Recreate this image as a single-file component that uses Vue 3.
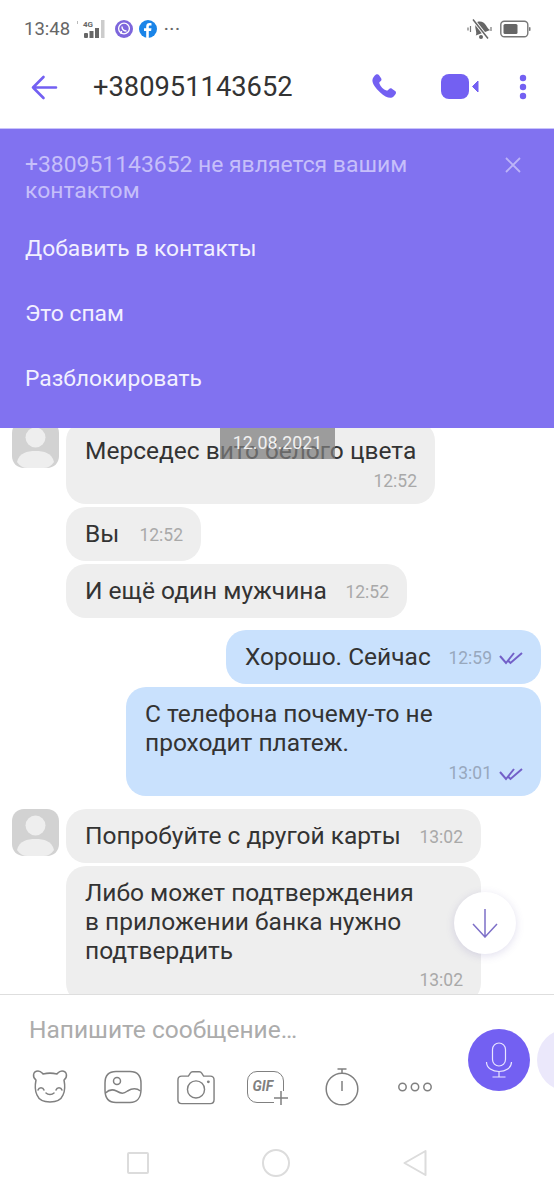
<template>
  <div class="phone">
    <div class="status">
      <span class="clock">13:48</span>
      <svg class="signal" width="32" height="20" viewBox="0 0 32 20">
        <rect x="2" y="2" width="1" height="3" fill="#bbb"/>
        <text x="8" y="8" font-size="8" font-weight="700" fill="#666" font-family="Roboto, sans-serif">4G</text>
        <rect x="9" y="14" width="4" height="5" rx="1" fill="#666"/>
        <rect x="14.500" y="12" width="4" height="7" fill="#666"/>
        <rect x="20" y="9" width="4" height="10" fill="#666"/>
        <rect x="26" y="1" width="3.500" height="18" fill="#ccc"/>
      </svg>
      <svg class="app" width="18" height="18" viewBox="0 0 18 18">
        <circle cx="9" cy="9" r="9" fill="#7d66dc"/>
        <circle cx="9" cy="8.500" r="5.400" fill="none" stroke="#fff" stroke-width="1.300"/>
        <path d="M6 14l.5-3M7 6.500c0 3 2 4.500 4.500 4.500" fill="none" stroke="#fff" stroke-width="1.400"/>
      </svg>
      <svg class="app" width="18" height="18" viewBox="0 0 18 18">
        <circle cx="9" cy="9" r="9" fill="#1a84e8"/>
        <path d="M9.800 18v-7h2.300l.4-2.700H9.800V6.800c0-.8.300-1.300 1.300-1.300h1.400V3.200c-.5-.1-1.200-.2-2-.2-2 0-3.300 1.200-3.300 3.400v1.900H5v2.700h2.200v7z" fill="#fff"/>
      </svg>
      <span class="more">···</span>
      <span class="grow"></span>
      <svg class="mute" width="26" height="22" viewBox="0 0 26 22">
        <path d="M6.500 15.500c1.500-1 1.500-3.500 2-6C9 6 11 3 14 3.500s5 3 5.500 6c.4 2.500 1 5 2.500 6z" fill="#666" transform="rotate(-20 13 10)"/>
        <circle cx="14" cy="19" r="2" fill="#666"/>
        <path d="M6 1.500l15 19" stroke="#fff" stroke-width="3.500"/>
        <path d="M6 1.500l15 19" stroke="#666" stroke-width="1.500"/>
        <path d="M3.500 8v6M1 9.500v3M24 9v4" stroke="#777" stroke-width="1.200"/>
      </svg>
      <svg class="battery" width="31" height="18" viewBox="0 0 31 18">
        <rect x=".8" y="1.300" width="27" height="15.400" rx="3.500" fill="none" stroke="#777" stroke-width="1.400"/>
        <rect x="3.500" y="4" width="14" height="10" rx="1.500" fill="#666"/>
        <rect x="29" y="7" width="1.500" height="4" rx=".7" fill="#777"/>
      </svg>
    </div>

    <header class="head">
      <svg class="back" width="28" height="28" viewBox="0 0 28 28">
        <path d="M26 14.500H3M13.500 4L3 14.500 13.500 25" fill="none" stroke="#7360f2" stroke-width="2.600" stroke-linecap="round" stroke-linejoin="round"/>
      </svg>
      <span class="title">+380951143652</span>
      <span class="grow"></span>
      <svg width="26" height="26" viewBox="0 0 26 26">
        <path d="M5 .6c1-.6 2.200-.5 2.900.4l2.200 3.200c.6.9.5 2-.3 2.800L8.600 8.100c-.4.400-.4.900-.2 1.400.6 1.600 1.500 3 2.700 4.200 1.300 1.300 2.800 2.200 4.400 2.800.5.200 1 .1 1.400-.3l1.200-1.200c.8-.8 1.900-.9 2.800-.3l3.200 2.200c1 .7 1.200 2 .5 3-.9 1.300-2.100 3-3.600 3.600-2.800 1-7.700-1-11.800-5.100C4.500 14.300 1.300 9.300 1.400 6.200 1.500 4.300 3.400 1.700 5 .6z" fill="#7360f2"/>
      </svg>
      <svg class="video" width="40" height="26" viewBox="0 0 40 26">
        <rect x="1" y="0" width="28" height="25" rx="8" fill="#7360f2"/>
        <path d="M38 7v11l-5.500-5.500z" fill="#7360f2" stroke="#7360f2" stroke-linejoin="round"/>
      </svg>
      <svg class="dots" width="8" height="26" viewBox="0 0 8 26">
        <circle cx="4" cy="4" r="3.200" fill="#7360f2"/>
        <circle cx="4" cy="13" r="3.200" fill="#7360f2"/>
        <circle cx="4" cy="22" r="3.200" fill="#7360f2"/>
      </svg>
    </header>

    <section class="banner">
      <div class="notice">
        <p>+380951143652 не является вашим контактом</p>
        <svg width="16" height="16" viewBox="0 0 16 16">
          <path d="M1 1l14 14M15 1L1 15" stroke="#bdb4f8" stroke-width="1.800"/>
        </svg>
      </div>
      <div class="action" v-for="a in actions" :key="a">{{ a }}</div>
    </section>

    <main class="chat">
      <div class="date">12.08.2021</div>
      <div class="feed">
        <div v-for="(m, i) in messages" :key="i" class="msg" :class="[m.me ? 'me' : 'them', { first: m.first }]">
          <svg v-if="m.avatar" class="avatar" width="47" height="47" viewBox="0 0 47 47">
            <path d="M12 0h23c7 0 12 5 12 12v23c0 7-5 12-12 12H12C5 47 0 42 0 35V12C0 5 5 0 12 0z" fill="#d2d2d2"/>
            <circle cx="23.500" cy="16.500" r="10" fill="#eeeeee"/>
            <path d="M5 41c2-9 10-11 18.500-11S40 32 42 41c-3 4-6 6-10 6H15c-4 0-7-2-10-6z" fill="#eeeeee"/>
          </svg>
          <div class="bubble" :class="{ stacked: m.stacked }" :style="{ width: m.width + 'px', height: m.height ? m.height + 'px' : null }">
            <span class="text">{{ m.text }}</span>
            <span class="meta">
              <span class="time">{{ m.time }}</span>
              <svg v-if="m.me" width="24" height="14" viewBox="0 0 24 14">
                <path d="M1 5l6 7L15 2M9 9.500l2.500 2.500L23 2" fill="none" stroke="#7360c8" stroke-width="2"/>
              </svg>
            </span>
          </div>
        </div>
      </div>
      <button class="down">
        <svg width="28" height="30" viewBox="0 0 28 30">
          <path d="M14 1v28M2 16l12 13 12-13" fill="none" stroke="#7e70c8" stroke-width="1.500"/>
        </svg>
      </button>
    </main>

    <footer class="composer">
      <div class="placeholder">Напишите сообщение…</div>
      <div class="tools">
        <span class="tool">
          <svg width="40" height="36" viewBox="0 0 40 36">
            <path d="M6 11C2 8 3 2 8 2c3 0 4 2 5 3 4-1 10-1 14 0 1-1 2-3 5-3 5 0 6 6 2 9 1 5 1 11-1 15-2 5-6 7-13 7s-11-2-13-7c-2-4-2-10-1-15z" fill="none" stroke="#808080" stroke-width="1.500" stroke-linejoin="round"/>
            <path d="M8 21c1-3 5-3 6 0M26 21c1-3 5-3 6 0M16 24c2 2 6 2 8 0" fill="none" stroke="#808080" stroke-width="1.500" stroke-linecap="round"/>
          </svg>
        </span>
        <span class="tool">
          <svg width="38" height="34" viewBox="0 0 38 34">
            <path d="M12 1.500h14c7 0 11 4 11 12v6c0 8-4 13-11 13H12C5 32.500 1 28 1 20v-7C1 5 5 1.500 12 1.500z" fill="none" stroke="#808080" stroke-width="1.500"/>
            <circle cx="13" cy="11" r="3.500" fill="none" stroke="#808080" stroke-width="1.500"/>
            <path d="M1.500 23c4-4 7-4 11-2 5 3 7 3 11 0 5-3 9-3 13 0" fill="none" stroke="#808080" stroke-width="1.500"/>
          </svg>
        </span>
        <span class="tool">
          <svg width="38" height="35" viewBox="0 0 40 36">
            <path d="M5 6h7l2-3c.5-1 1-1.500 2.500-1.500h7C25 1.500 25.500 2 26 3l2 3h7c2.500 0 4 1.500 4 4v21c0 2.500-1.500 4-4 4H5c-2.500 0-4-1.500-4-4V10c0-2.500 1.500-4 4-4z" fill="none" stroke="#808080" stroke-width="1.500"/>
            <circle cx="20" cy="20" r="9" fill="none" stroke="#808080" stroke-width="1.500"/>
            <circle cx="33" cy="12" r="1.500" fill="#808080"/>
          </svg>
        </span>
        <span class="tool gif">
          <span class="gif-box">GIF</span>
          <svg class="plus" width="14" height="14" viewBox="0 0 14 14">
            <path d="M7 0v14M0 7h14" stroke="#808080" stroke-width="1.500"/>
          </svg>
        </span>
        <span class="tool">
          <svg width="34" height="38" viewBox="0 0 34 38">
            <circle cx="17" cy="21" r="15.800" fill="none" stroke="#808080" stroke-width="1.500"/>
            <path d="M17 1v4M12.500 1h9M17 13v10" fill="none" stroke="#808080" stroke-width="1.500"/>
          </svg>
        </span>
        <span class="tool">
          <svg width="34" height="12" viewBox="0 0 34 12">
            <circle cx="4.500" cy="6" r="3.700" fill="none" stroke="#808080" stroke-width="1.500"/>
            <circle cx="17" cy="6" r="3.700" fill="none" stroke="#808080" stroke-width="1.500"/>
            <circle cx="29.500" cy="6" r="3.700" fill="none" stroke="#808080" stroke-width="1.500"/>
          </svg>
        </span>
      </div>
      <span class="ghost"></span>
      <button class="mic">
        <svg width="28" height="36" viewBox="0 0 28 36">
          <rect x="7.500" y="1" width="13" height="23" rx="6.500" fill="none" stroke="#e9e5ff" stroke-width="1.200"/>
          <path d="M1.500 20c0 6 6 9.500 12.500 9.500S26.500 26 26.500 20M14 29.500V35M7.500 35h13" fill="none" stroke="#e9e5ff" stroke-width="1.200"/>
        </svg>
      </button>
    </footer>

    <nav class="nav">
      <span class="sq"></span>
      <span class="ci"></span>
      <svg width="24" height="28" viewBox="0 0 24 28">
        <path d="M22.500 2L1.500 14l21 12z" fill="none" stroke="#dcdcdc" stroke-width="2" stroke-linejoin="round"/>
      </svg>
    </nav>
  </div>
</template>

<script setup>
const actions = ['Добавить в контакты', 'Это спам', 'Разблокировать']

const messages = [
  { text: 'Мерседес вито белого цвета', time: '12:52', width: 369, height: 83, avatar: true, stacked: true, first: true },
  { text: 'Вы', time: '12:52', width: 135 },
  { text: 'И ещё один мужчина', time: '12:52', width: 341 },
  { text: 'Хорошо. Сейчас', time: '12:59', width: 315, me: true },
  { text: 'С телефона почему-то не проходит платеж.', time: '13:01', width: 415, height: 109, me: true, stacked: true },
  { text: 'Попробуйте с другой карты', time: '13:02', width: 415, avatar: true },
  { text: 'Либо может подтверждения в приложении банка нужно подтвердить', time: '13:02', width: 415, height: 137, stacked: true }
]
</script>

<style>
html, body { margin: 0; background: #fff; }
</style>

<style scoped>
.phone {
  width: 554px;
  height: 1200px;
  overflow: hidden;
  display: flex;
  flex-direction: column;
  background: #fff;
  font-family: Roboto, "Noto Sans", sans-serif;
  color: #333;
}
.grow { flex: 1; }

.status {
  height: 58px;
  display: flex;
  align-items: center;
  padding: 0 24px;
  gap: 6px;
  color: #666;
}
.clock { font-size: 18.500px; margin-right: -1px; }
.signal { margin-right: 2px; }
.more { font-size: 15px; font-weight: 700; letter-spacing: 1px; margin-left: 1px; }
.battery { margin-left: 1px; margin-right: -1px; }

.head {
  height: 58px;
  display: flex;
  align-items: center;
  padding: 0 27px 12px 30px;
  border-bottom: 1px solid #c9c3fa;
  box-sizing: content-box;
}
.title { font-size: 27.300px; margin-left: 35px; color: #333; }
.video { margin-left: 43px; }
.dots { margin-left: 39px; }

.banner {
  position: relative;
  z-index: 2;
  height: 299px;
  flex: none;
  box-sizing: border-box;
  padding: 23px 25px 0;
  background: #8172f0;
  color: #f2f0ff;
}
.notice {
  display: flex;
  justify-content: space-between;
  align-items: flex-start;
  height: 64px;
  color: #c6bffa;
}
.notice p {
  margin: 0;
  width: 440px;
  font-size: 22.900px;
  line-height: 26px;
}
.notice svg { margin: 5px 8px 0 0; }
.action {
  height: 65px;
  font-size: 22.800px;
  line-height: 65px;
}

.chat {
  position: relative;
  height: 566px;
  flex: none;
  overflow: hidden;
}
.date {
  position: absolute;
  z-index: 1;
  top: 0;
  left: 220px;
  width: 115px;
  height: 31px;
  padding-top: 4px;
  box-sizing: border-box;
  text-align: center;
  font-size: 17.800px;
  color: #f1f1f1;
  background: rgba(125, 125, 125, .72);
}
.feed {
  display: flex;
  flex-direction: column;
  gap: 3px;
  margin-top: -7px;
  padding: 0 13px 0 12px;
}
.msg { display: flex; position: relative; }
.them { padding-left: 54px; }
.me { justify-content: flex-end; }
.me:nth-child(4) { margin-top: 9px; }
.them:nth-child(6) { margin-top: 10px; }
.avatar { position: absolute; left: 0; top: 0; }
.bubble {
  box-sizing: border-box;
  min-height: 54px;
  padding: 0 18px 2px 19px;
  display: flex;
  align-items: center;
  justify-content: space-between;
  border-radius: 20px;
  background: #eeeeee;
  font-size: 24.500px;
  line-height: 29px;
  color: #333;
}
.me .bubble { background: #c9e1fd; }
.bubble.stacked {
  display: block;
  position: relative;
  padding-top: 12px;
}
.first .bubble.stacked { padding-top: 15px; }
.stacked .text { display: block; max-width: 345px; }
.stacked .meta { position: absolute; right: 18px; bottom: 8px; margin-top: 0; }
.meta { display: inline-flex; align-items: center; gap: 7px; margin-top: 4px; }
.time { font-size: 17.500px; color: #a9a9a9; }
.me .time { color: #98a8bd; }
.down {
  position: absolute;
  left: 454px;
  top: 464px;
  width: 62px;
  height: 62px;
  padding: 0;
  border: 0;
  border-radius: 50%;
  background: #fff;
  box-shadow: 0 2px 8px rgba(90, 80, 160, .18);
  display: flex;
  align-items: center;
  justify-content: center;
}

.composer {
  position: relative;
  height: 128px;
  flex: none;
  border-top: 1px solid #dedede;
  box-sizing: content-box;
}
.placeholder {
  padding: 21px 0 0 29px;
  height: 40px;
  font-size: 24.500px;
  line-height: 28px;
  color: #acacac;
}
.tools {
  display: grid;
  grid-template-columns: repeat(6, 73px);
  padding: 6px 0 6px 13px;
  align-items: center;
  height: 50px;
}
.tool { display: flex; justify-content: center; align-items: center; position: relative; }
.gif-box {
  width: 37px;
  height: 32px;
  margin-right: 7px;
  box-sizing: border-box;
  border: 1.500px solid #808080;
  border-radius: 10px;
  font-size: 14px;
  font-weight: 700;
  font-style: italic;
  color: #808080;
  padding: 6px 0 0 5px;
  line-height: 17px;
}
.plus { position: absolute; left: 42px; top: 20px; background: #fff; }
.mic {
  position: absolute;
  left: 468px;
  top: 34px;
  width: 62px;
  height: 62px;
  padding: 0;
  border: 0;
  border-radius: 50%;
  background: #7360f2;
  display: flex;
  align-items: center;
  justify-content: center;
}
.ghost {
  position: absolute;
  left: 537px;
  top: 34px;
  width: 62px;
  height: 62px;
  border-radius: 50%;
  background: #ebe8fb;
}

.nav {
  flex: 1;
  display: flex;
  align-items: center;
  justify-content: center;
  gap: 113px;
  padding-top: 3px;
}
.sq {
  width: 22px;
  height: 22px;
  border: 2px solid #dcdcdc;
  border-radius: 2px;
  box-sizing: border-box;
}
.ci {
  width: 28px;
  height: 28px;
  border: 2px solid #dcdcdc;
  border-radius: 50%;
  box-sizing: border-box;
}
</style>
